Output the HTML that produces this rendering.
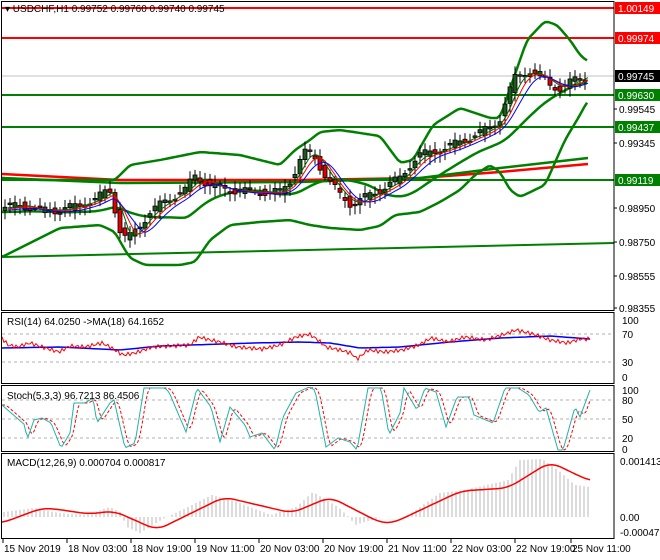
<!DOCTYPE html>
<html><head><meta charset="utf-8"><style>
html,body{margin:0;padding:0;background:#fff;width:660px;height:560px;overflow:hidden}
svg{display:block;font-family:"Liberation Sans",Tahoma,sans-serif}
</style></head><body>
<svg id="s" width="660" height="560" viewBox="0 0 660 560" xmlns="http://www.w3.org/2000/svg">
<rect width="660" height="560" fill="#fff"/>
<g id="g"></g>
</svg>
<script>
const NS="http://www.w3.org/2000/svg",G=document.getElementById('g');
function el(t,a,txt){const e=document.createElementNS(NS,t);for(const k in a)e.setAttribute(k,a[k]);if(txt!=null)e.textContent=txt;G.appendChild(e);return e;}
function interp(k,x){if(x<=k[0][0])return k[0][1];for(let i=1;i<k.length;i++){if(x<=k[i][0]){const a=k[i-1],b=k[i];return a[1]+(b[1]-a[1])*(x-a[0])/(b[0]-a[0]);}}return k[k.length-1][1];}
function poly(pts,c,w,extra){el('polyline',Object.assign({points:pts.map(p=>p[0].toFixed(1)+','+p[1].toFixed(1)).join(' '),fill:'none',stroke:c,'stroke-width':w},extra||{}));}
function kp(k,x0,x1,st){const r=[];for(let x=x0;x<=x1;x+=st)r.push([x,interp(k,x)]);return r;}
function smooth(k,x0,x1,st,w){const r=[];for(let x=x0;x<=x1;x+=st){let s=0,n=0;for(let t=x-w;t<=x+w;t+=1){s+=interp(k,Math.min(x1,Math.max(x0,t)));n++;}r.push([x,s/n]);}return r;}
const R=614;
el('line',{x1:2,y1:8,x2:R,y2:8,stroke:'#f00','stroke-width':2});
el('line',{x1:2,y1:38,x2:R,y2:38,stroke:'#f00','stroke-width':2});
el('line',{x1:2,y1:76,x2:R,y2:76,stroke:'#c0c0c0','stroke-width':1});
el('line',{x1:2,y1:95,x2:R,y2:95,stroke:'#008000','stroke-width':2});
el('line',{x1:2,y1:127,x2:R,y2:127,stroke:'#008000','stroke-width':2});
el('line',{x1:2,y1:180,x2:R,y2:180,stroke:'#008000','stroke-width':2});
el('line',{x1:2,y1:257,x2:R,y2:243,stroke:'#008000','stroke-width':2});
poly([[2,174],[120,180],[300,180],[420,178],[500,172],[588,164]],'#f00',2.5);
poly([[2,178],[120,183],[300,182],[420,178],[500,168],[588,158]],'#008000',2.5);
const P=[[2,208],[20,205],[40,210],[60,210],[80,205],[95,200],[105,192],[112,190],[118,228],[127,240],[140,225],[150,212],[167,200],[185,190],[195,176],[210,185],[230,190],[260,192],[280,192],[292,178],[300,160],[307,150],[315,158],[327,178],[340,195],[352,205],[360,200],[380,190],[400,178],[412,162],[420,155],[440,150],[460,142],[475,135],[490,128],[500,118],[508,95],[515,78],[525,72],[540,75],[550,85],[560,88],[575,80],[588,75]];
function ma(w,x){let s=0,n=0;for(let t=x-w;t<=x;t+=2){s+=interp(P,t);n++;}return s/n;}
poly(smooth([[2,178],[40,180],[100,180],[115,180],[130,165],[160,160],[200,152],[240,155],[280,165],[295,150],[310,140],[320,132],[340,130],[380,136],[400,163],[413,160],[433,125],[460,108],[490,118],[500,118],[513,80],[527,40],[545,21],[557,25],[570,40],[580,55],[587,61]],2,587,3,3),'#008000',2.5);
poly(smooth([[2,257],[30,243],[60,228],[100,225],[115,232],[122,245],[130,258],[145,265],[180,265],[195,262],[210,240],[230,225],[260,222],[290,220],[310,225],[330,228],[360,230],[380,226],[395,215],[420,212],[440,202],[460,190],[475,175],[490,165],[500,172],[510,190],[520,197],[545,185],[565,140],[580,115],[588,100]],2,588,3,3),'#008000',2.5);
{const a=[];for(let x=2;x<=588;x+=3)a.push([x,ma(70,x)+4]);poly(a,'#008000',2.5);}
for(let x=5;x<=588;x+=5){
 const o=interp(P,x-5)+Math.sin(x*1.7)*3,c=interp(P,x)+Math.sin(x*2.3+1)*4;
 const hi=Math.min(o,c)-3-Math.abs(Math.sin(x*0.9))*5,lo=Math.max(o,c)+3+Math.abs(Math.cos(x*1.3))*6;
 el('line',{x1:x,y1:hi,x2:x,y2:lo,stroke:'#000','stroke-width':1});
 const t=Math.min(o,c),h=Math.max(1.5,Math.abs(o-c));
 el('rect',{x:x-2,y:t,width:4,height:h,fill:c<o?'#1e5a1e':'#e00000',stroke:'#000','stroke-width':0.8});
}
[[14,'#006400'],[20,'#f00'],[28,'#00f']].forEach(([w,c])=>{const a=[];for(let x=8;x<=588;x+=2)a.push([x,ma(w,x)+(w-14)*0.15]);poly(a,c,1);});
[334,362].forEach(y=>el('line',{x1:2,y1:y,x2:R,y2:y,stroke:'#b0b0b0','stroke-dasharray':'3,3'}));
const RS=[[2,338],[8,345],[17,347],[30,343],[42,347],[59,352],[70,346],[85,347],[102,343],[110,347],[123,355],[135,353],[152,347],[170,346],[190,345],[199,337],[210,340],[220,342],[237,347],[262,349],[280,345],[296,337],[309,334],[318,340],[326,347],[340,350],[351,353],[357,359],[368,350],[385,352],[402,350],[419,345],[431,338],[448,342],[465,337],[486,340],[508,333],[516,330],[533,334],[550,340],[567,343],[580,339],[590,339]];
poly(kp([[2,348],[60,347],[120,350],[160,346],[254,343],[300,342],[330,343],[360,348],[400,347],[450,342],[500,338],[550,336],[590,339]],2,590,4),'#00f',1.5);
{const a=[];for(let x=2;x<=590;x+=2)a.push([x,interp(RS,x)+Math.sin(x*1.9)*2]);poly(a,'#f00',1);}
[400,419,438].forEach(y=>el('line',{x1:2,y1:y,x2:R,y2:y,stroke:'#b0b0b0','stroke-dasharray':'3,3'}));
const ST=[[2,405],[25,425],[27,440],[34,420],[42,418],[51,423],[61,448],[70,433],[74,403],[85,403],[93,398],[97,423],[110,403],[114,400],[125,448],[135,443],[144,388],[152,388],[165,388],[169,392],[186,432],[197,388],[211,407],[220,442],[230,407],[245,425],[250,437],[262,433],[275,450],[283,417],[296,393],[309,387],[315,390],[326,447],[338,438],[350,442],[357,450],[368,388],[381,388],[389,435],[400,413],[404,388],[417,410],[425,388],[436,392],[446,427],[457,397],[469,397],[474,415],[493,423],[505,388],[518,388],[529,395],[539,412],[546,408],[558,450],[563,450],[575,407],[580,417],[590,390]];
{const a=[],b=[];for(let x=2;x<=590;x+=2){a.push([x,interp(ST,x)]);let s=0;for(let k=0;k<3;k++)s+=interp(ST,x-2-k*2);b.push([x,s/3]);}
poly(b,'#f00',1,{'stroke-dasharray':'3,2'});poly(a,'#20b2aa',1);}
const H=[[4,512],[34,508],[59,513],[85,515],[110,507],[120,512],[127,527],[140,533],[161,520],[186,508],[212,495],[237,502],[271,515],[296,507],[313,492],[338,507],[350,518],[355,525],[381,517],[406,517],[423,505],[440,493],[465,490],[508,480],[520,460],[542,459],[558,470],[575,485],[590,487]];
for(let x=4;x<=590;x+=4){const y=interp(H,x);el('line',{x1:x,y1:517,x2:x,y2:y,stroke:'#b8b8b8','stroke-width':1});}
poly(smooth([[2,523],[42,508],[55,509],[89,514],[114,511],[157,530],[224,497],[292,513],[330,497],[381,523],[393,523],[461,491],[508,488],[550,462],[590,481]],2,590,2,10),'#f00',1.5);
el('rect',{x:1.5,y:1.5,width:R-1.5,height:309,fill:'none',stroke:'#000'});
el('rect',{x:1.5,y:312.5,width:R-1.5,height:71,fill:'none',stroke:'#000'});
el('rect',{x:1.5,y:385.5,width:R-1.5,height:66,fill:'none',stroke:'#000'});
el('rect',{x:1.5,y:453.5,width:R-1.5,height:85,fill:'none',stroke:'#000'});
el('text',{x:5,y:12,'font-size':10,fill:'#000'},'▾ USDCHF,H1  0.99752 0.99760 0.99740 0.99745');
el('text',{x:7,y:325,'font-size':10},'RSI(14) 64.0250  ->MA(18) 64.1652');
el('text',{x:7,y:399,'font-size':10},'Stoch(5,3,3) 96.7213 86.4506');
el('text',{x:7,y:466,'font-size':10},'MACD(12,26,9) 0.000704 0.000817');
[[1.00149,8,'#f00'],[0.99974,38,'#f00'],[0.99745,76,'#000'],[0.99630,95,'#008000'],[0.99437,127,'#008000'],[0.99119,180,'#008000']].forEach(([v,y,c])=>{
 el('rect',{x:615,y:y-6,width:45,height:12,fill:c});el('text',{x:618,y:y+4,'font-size':10,fill:'#fff'},v.toFixed(5));});
[['0.99545',109],['0.99345',143],['0.98950',208],['0.98750',242],['0.98555',276],['0.98355',308]].forEach(([t,y])=>{el('line',{x1:R,y1:y,x2:R+3,y2:y,stroke:'#000'});el('text',{x:619,y:y+4,'font-size':10},t);});
[['100',320],['70',334],['30',362],['0',377]].forEach(([t,y])=>el('text',{x:622,y:y+4,'font-size':10},t));
[['100',390],['80',400],['50',419],['20',438],['0',449]].forEach(([t,y])=>el('text',{x:622,y:y+4,'font-size':10},t));
[['0.001413',461],['0.00',517],['-0.000472',532]].forEach(([t,y])=>el('text',{x:620,y:y+4,'font-size':10},t));
[['15 Nov 2019',3],['18 Nov 03:00',67],['18 Nov 19:00',131],['19 Nov 11:00',195],['20 Nov 03:00',259],['20 Nov 19:00',323],['21 Nov 11:00',387],['22 Nov 03:00',451],['22 Nov 19:00',515],['25 Nov 11:00',571]].forEach(([t,x])=>{
 el('line',{x1:x,y1:539,x2:x,y2:543,stroke:'#000'});el('text',{x:x+1,y:552,'font-size':10},t);});
</script>
</body></html>
